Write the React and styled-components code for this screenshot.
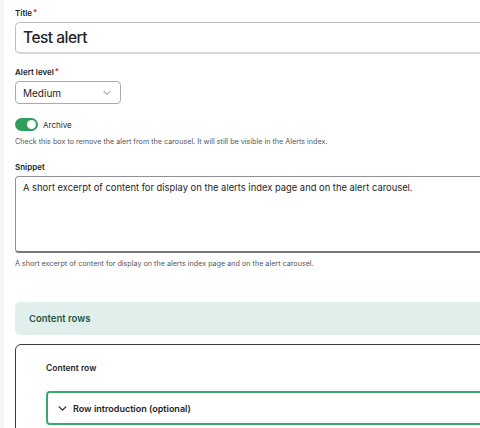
import React from "react";
import styled, { createGlobalStyle } from "styled-components";

const GlobalStyle = createGlobalStyle`
  html, body {
    margin: 0;
    padding: 0;
    background: #f7f7f8;
    overflow: hidden;
  }
  body {
    font-family: Inter, "Noto Sans", sans-serif;
    color: #232429;
  }
`;

function Chevron({ size = 10, color = "#6b6c72", weight = 0.9 }) {
  return (
    <svg width={size} height={size} viewBox="0 0 10 10">
      <path d="M2 3.5 L5 6.5 L8 3.5" fill="none" stroke={color} strokeWidth={weight} strokeLinecap="round" strokeLinejoin="round" />
    </svg>
  );
}

function App() {
  return (
    <>
      <GlobalStyle />
      <Page>
        <Form>
          <Field>
            <Label required>Title</Label>
            <TitleInput>Test alert</TitleInput>
          </Field>

          <Field>
            <Label required>Alert level</Label>
            <Select>
              Medium
              <Chevron />
            </Select>
          </Field>

          <Field gap={15}>
            <ToggleRow>
              <Toggle>
                <Knob />
              </Toggle>
              <ToggleLabel>Archive</ToggleLabel>
            </ToggleRow>
            <Help>
              Check this box to remove the alert from the carousel. It will still be visible in the Alerts index.
            </Help>
          </Field>

          <Field>
            <Label>Snippet</Label>
            <TextArea>
              A short excerpt of content for display on the alerts index page and on the alert carousel.
            </TextArea>
            <Help>A short excerpt of content for display on the alerts index page and on the alert carousel.</Help>
          </Field>

          <SectionHeader>Content rows</SectionHeader>

          <RowCard>
            <RowTitle>Content row</RowTitle>
            <Details>
              <Chevron size={11} color="#232429" weight={1.1} />
              Row introduction (optional)
            </Details>
          </RowCard>
        </Form>
      </Page>
    </>
  );
}

export default App;

const Page = styled.div`
  margin-left: 4px;
  background: #ffffff;
  height: 428px;
  overflow: hidden;
`;

const Form = styled.div`
  width: 620px;
  padding: 7px 0 0 11px;
  display: flex;
  flex-direction: column;
`;

const Field = styled.div`
  display: flex;
  flex-direction: column;
  margin-bottom: ${(p) => p.gap ?? 12}px;
`;

const Label = styled.div`
  font-size: 8px;
  font-weight: 600;
  line-height: 10px;
  margin-bottom: 4px;
  &::after {
    content: ${(p) => (p.required ? '"*"' : '""')};
    color: #d72222;
    margin-left: 1px;
    font-size: 8px;
    vertical-align: 1px;
  }
`;

const TitleInput = styled.div`
  height: 32px;
  box-sizing: border-box;
  border: 1px solid #bdbdc0;
  border-bottom: 2px solid #d6d6d8;
  border-radius: 5px;
  display: flex;
  align-items: center;
  padding: 0 7px;
  font-size: 15.5px;
  font-weight: 450;
  letter-spacing: -0.5px;
`;

const Select = styled.div`
  width: 106px;
  height: 23px;
  box-sizing: border-box;
  border: 1px solid #a9a9ae;
  border-radius: 4px;
  display: flex;
  align-items: center;
  justify-content: space-between;
  padding: 0 8px 0 7px;
  font-size: 10px;
`;

const ToggleRow = styled.div`
  display: flex;
  align-items: center;
  gap: 5px;
  margin-top: 2px;
`;

const Toggle = styled.div`
  width: 23px;
  height: 13px;
  border-radius: 7px;
  background: #2f9d5c;
  position: relative;
`;

const Knob = styled.div`
  position: absolute;
  right: 2px;
  top: 2px;
  width: 9px;
  height: 9px;
  border-radius: 50%;
  background: #ffffff;
`;

const ToggleLabel = styled.span`
  font-size: 8px;
  color: #2c2d31;
`;

const Help = styled.div`
  font-size: 7.2px;
  color: #55565b;
  margin-top: 6px;
  line-height: 9px;
`;

const TextArea = styled.div`
  height: 77px;
  box-sizing: border-box;
  border: 1px solid #8e9096;
  border-bottom: 2px solid #77787e;
  border-radius: 4px;
  padding: 5px 7px;
  font-size: 9.4px;
  line-height: 12px;
`;

const SectionHeader = styled.div`
  margin-top: 22px;
  height: 33px;
  border-radius: 5px;
  background: #e1efec;
  display: flex;
  align-items: center;
  padding-left: 14px;
  font-size: 9.5px;
  font-weight: 600;
  color: #1f5648;
`;

const RowCard = styled.div`
  margin-top: 9px;
  border: 1.5px solid #3b3c40;
  border-radius: 6px;
  padding: 16px 0 0 30px;
  height: 120px;
`;

const RowTitle = styled.div`
  font-size: 8.5px;
  font-weight: 600;
  line-height: 14px;
  margin-bottom: 16px;
`;

const Details = styled.div`
  height: 34px;
  box-sizing: border-box;
  border: 2px solid #3aa86b;
  border-radius: 4px;
  display: flex;
  align-items: center;
  gap: 5px;
  padding-left: 9px;
  font-size: 9px;
  font-weight: 600;
`;
